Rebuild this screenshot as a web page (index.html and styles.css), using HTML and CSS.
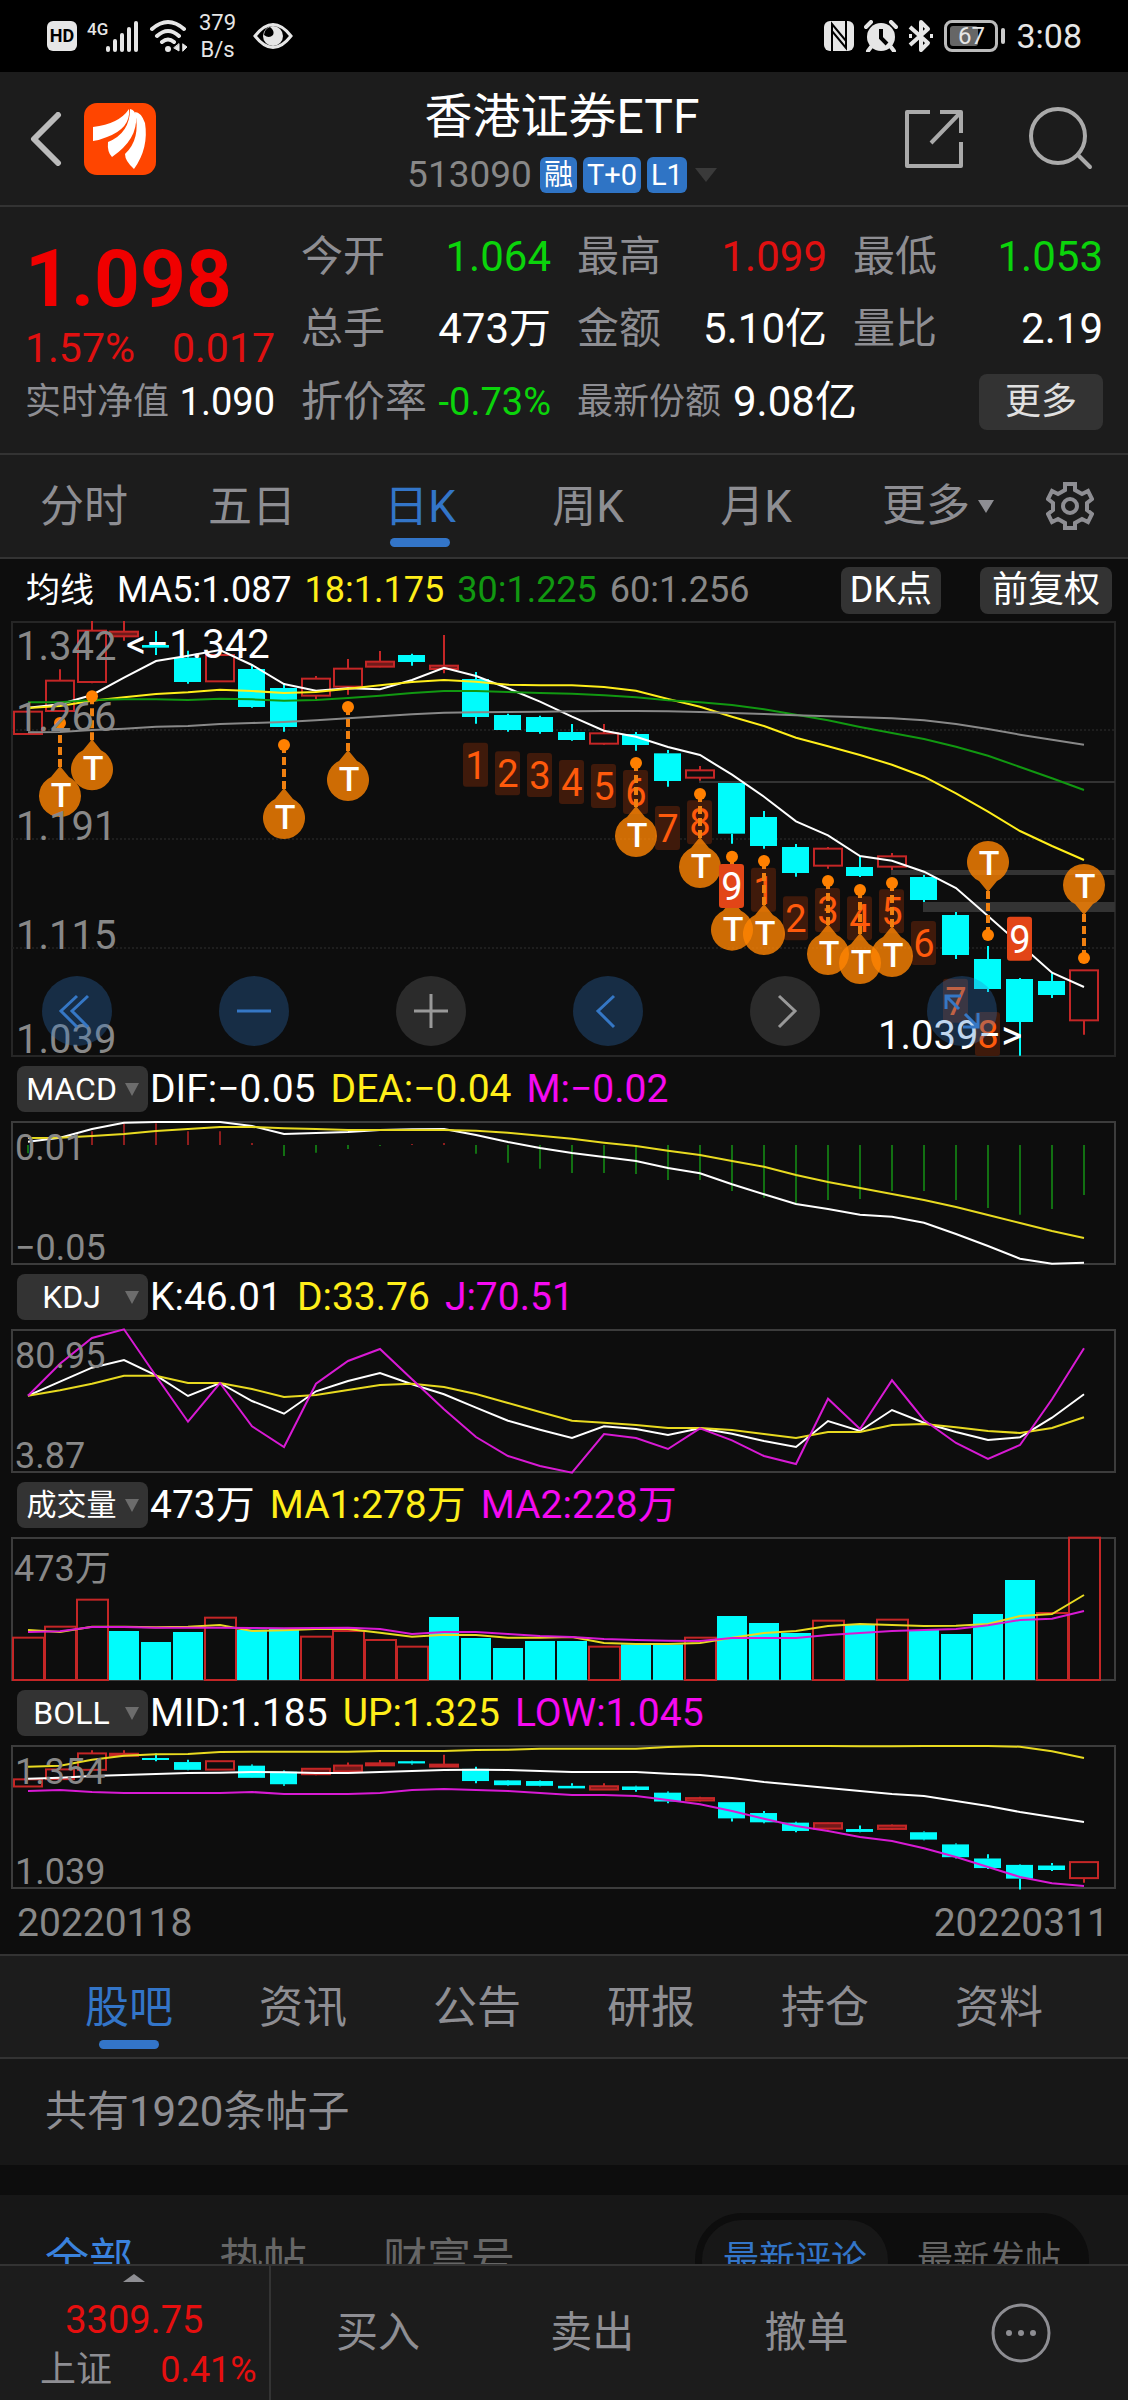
FILE: index.html
```html
<!DOCTYPE html>
<html lang="zh-CN">
<head>
<meta charset="utf-8">
<meta name="viewport" content="width=device-width, initial-scale=1">
<title>香港证券ETF 513090</title>
<link rel="stylesheet" href="styles.css">
</head>
<body>
<div class="app">
  <div class="status">
    <div class="status-side">
      <span class="hd">HD</span>
      <svg class="signal" width="52" height="36" viewBox="0 0 52 36" fill="#e6e6e6"><text x="0" y="17" class="net">4G</text><rect x="19" y="28" width="4" height="6" rx="2"/><rect x="26" y="21" width="4" height="13" rx="2"/><rect x="33" y="15" width="4" height="19" rx="2"/><rect x="40" y="9" width="4" height="25" rx="2"/><rect x="47" y="3" width="4" height="31" rx="2"/></svg>
      <svg class="wifi" width="40" height="36" viewBox="0 0 40 36" fill="none" stroke="#e6e6e6" stroke-width="4" stroke-linecap="round"><path d="M3 11Q19-3 35 11M8 18Q19 8 30 18M13 24Q19 19 25 24"/><circle cx="19" cy="31" r="3" fill="#e6e6e6" stroke="none"/><path d="M30 26v7l-5-3zM34 26l4 3-4 4z" fill="#e6e6e6" stroke-width="1"/></svg>
      <span class="rate">379<br>B/s</span>
      <svg class="eye" width="40" height="28" viewBox="0 0 40 28"><path d="M2 14Q20-9 38 14Q20 37 2 14Z" fill="none" stroke="#e6e6e6" stroke-width="3"/><circle cx="20" cy="14" r="10" fill="#e6e6e6"/><path d="M17 5a9 9 0 0 0-6 8q5 4 9 0 2-4-3-8z" fill="#000"/></svg>
    </div>
    <div class="status-side">
      <svg width="30" height="30" viewBox="0 0 30 30"><rect width="30" height="30" rx="6" fill="#e6e6e6"/><path d="M8 30V3l14 17V7M22 0v27L8 10v13" fill="none" stroke="#000" stroke-width="2"/></svg>
      <svg class="alarm" width="34" height="32" viewBox="0 0 34 32"><circle cx="17" cy="17" r="14" fill="#e6e6e6"/><path d="M2 7l5-5M32 7l-5-5M7 27l-3 4M27 27l3 4" stroke="#e6e6e6" stroke-width="4" stroke-linecap="round"/><path d="M17 9v9l6 6" fill="none" stroke="#000" stroke-width="4"/></svg>
      <svg width="26" height="34" viewBox="0 0 26 34" fill="none" stroke="#e6e6e6" stroke-width="4" stroke-linejoin="round"><path d="M2 8l18 16-7 7V3l7 7L2 26"/><path d="M22 17h3M1 17h3"/></svg>
      <span class="battery"><i></i><b>67</b></span>
      <span class="clock">3:08</span>
    </div>
  </div>

  <header class="header">
    <div class="header-left">
      <button class="icon-btn" aria-label="返回"><svg width="32" height="54" viewBox="0 0 32 54" fill="none" stroke="#bbb" stroke-width="6" stroke-linecap="round" stroke-linejoin="round"><path d="M28 3L4 27l24 24"/></svg></button>
      <svg class="logo" width="72" height="72" viewBox="0 0 72 72"><rect width="72" height="72" rx="13" fill="#ff4500"/><path d="M9 24Q35 21 45 6Q47 25 23 34Q16 37 9 38ZM24 39Q46 30 46 6Q51 7 52 13Q54 36 28 54Q23 49 24 39ZM41 51Q57 36 51 9Q57 9 61 20Q65 45 50 66Q41 58 41 51Z" fill="#fff"/></svg>
    </div>
    <div class="header-title">
      <h1>香港证券ETF</h1>
      <div class="code">513090<span class="badges"><span>融</span><span>T+0</span><span>L1</span></span><svg width="22" height="14" viewBox="0 0 22 14"><path d="M0 0h22L11 14z" fill="#3a3a3a"/></svg></div>
    </div>
    <div class="header-right">
      <button class="icon-btn" aria-label="分享"><svg width="60" height="60" viewBox="0 0 60 60" fill="none" stroke="#aaa" stroke-width="4" stroke-linejoin="round"><path d="M26 3H3v54h54V33M36 3h21v21M57 3L27 34"/></svg></button>
      <button class="icon-btn" aria-label="搜索"><svg width="66" height="66" viewBox="0 0 66 66" fill="none" stroke="#aaa" stroke-width="4" stroke-linecap="round"><circle cx="30" cy="30" r="27"/><path d="M50 49l12 12"/></svg></button>
    </div>
  </header>

  <section class="quote">
    <div class="price">
      <strong>1.098</strong>
      <div><span>1.57%</span><span>0.017</span></div>
    </div>
    <div class="cell"><span>今开</span><b class="green">1.064</b></div>
    <div class="cell"><span>最高</span><b class="red">1.099</b></div>
    <div class="cell"><span>最低</span><b class="green">1.053</b></div>
    <div class="cell"><span>总手</span><b>473万</b></div>
    <div class="cell"><span>金额</span><b>5.10亿</b></div>
    <div class="cell"><span>量比</span><b>2.19</b></div>
    <div class="cell small"><span>实时净值</span><b>1.090</b></div>
    <div class="cell"><span>折价率</span><b class="green mid">-0.73%</b></div>
    <div class="cell share"><span>最新份额</span><b>9.08亿</b><button class="more">更多</button></div>
  </section>

  <nav class="periods">
    <a href="#">分时</a><a href="#">五日</a><a href="#" class="active">日K</a><a href="#">周K</a><a href="#">月K</a>
    <a href="#" class="other">更多<svg width="16" height="13" viewBox="0 0 16 13"><path d="M0 0h16L8 13z" fill="#8e8e93"/></svg></a>
    <button class="icon-btn gear" aria-label="设置"><svg width="48" height="50" viewBox="0 0 48 50" fill="none" stroke="#8e8e93" stroke-width="4"><path d="M19 3h10v6l7 4 6-3 4 8-5 4v7l5 4-4 8-6-3-7 4v5H19v-5l-7-4-6 3-4-8 5-4v-7l-5-4 4-8 6 3 7-4z"/><circle cx="24" cy="25" r="7"/></svg></button>
  </nav>

  <main class="content">
    <section class="charts">
      <div class="averages">
        <span class="averages-name">均线</span><span>MA5:1.087</span><span class="yellow">18:1.175</span><span class="ma30">30:1.225</span><span class="grey">60:1.256</span>
        <button class="tag dk">DK点</button><button class="tag">前复权</button>
      </div>
      <div class="kline">
        <svg id="kline" class="chart" viewBox="0 0 1128 436"></svg>
        <div class="tools">
          <button aria-label="最早"><svg viewBox="0 0 70 70"><path d="M35 20L19 35l16 16M46 20L30 35l16 16"/></svg></button>
          <button aria-label="缩小"><svg viewBox="0 0 70 70"><path d="M18 35h34"/></svg></button>
          <button aria-label="放大" class="off"><svg viewBox="0 0 70 70"><path d="M18 35h34M35 18v34"/></svg></button>
          <button aria-label="向左"><svg viewBox="0 0 70 70"><path d="M41 20L25 35l16 16"/></svg></button>
          <button aria-label="向右" class="off"><svg viewBox="0 0 70 70"><path d="M29 20l16 15-16 16"/></svg></button>
          <button aria-label="全屏"><svg viewBox="0 0 70 70"><path d="M19 33V20h15M20 21l12 12M51 37v14H36M50 50L38 38"/></svg></button>
        </div>
      </div>

      <div class="legend"><button class="pick"><span>MACD</span><i></i></button><span>DIF:−0.05</span><span class="yellow">DEA:−0.04</span><span class="pink">M:−0.02</span></div>
      <svg id="macd" class="chart" viewBox="0 0 1128 144"></svg>

      <div class="legend"><button class="pick"><span>KDJ</span><i></i></button><span>K:46.01</span><span class="yellow">D:33.76</span><span class="pink">J:70.51</span></div>
      <svg id="kdj" class="chart" viewBox="0 0 1128 144"></svg>

      <div class="legend"><button class="pick cjk"><span>成交量</span><i></i></button><span>473万</span><span class="yellow">MA1:278万</span><span class="pink">MA2:228万</span></div>
      <svg id="volume" class="chart" viewBox="0 0 1128 144"></svg>

      <div class="legend"><button class="pick"><span>BOLL</span><i></i></button><span>MID:1.185</span><span class="yellow">UP:1.325</span><span class="pink">LOW:1.045</span></div>
      <svg id="boll" class="chart" viewBox="0 0 1128 144"></svg>

      <div class="dates"><span>20220118</span><span>20220311</span></div>
    </section>

    <nav class="topics">
      <a href="#" class="active">股吧</a><a href="#">资讯</a><a href="#">公告</a><a href="#">研报</a><a href="#">持仓</a><a href="#">资料</a>
    </nav>
    <p class="count">共有1920条帖子</p>
    <div class="feed">
      <a href="#" class="active">全部</a><a href="#">热帖</a><a href="#">财富号</a>
      <div class="sort"><button class="on">最新评论</button><button>最新发帖</button></div>
    </div>
  </main>

  <footer class="bottom">
    <div class="index">
      <svg width="22" height="8" viewBox="0 0 22 8"><path d="M0 8h22L11 0z" fill="#8e8e93"/></svg>
      <strong>3309.75</strong>
      <div><span>上证</span><b>0.41%</b></div>
    </div>
    <button>买入</button><button>卖出</button><button>撤单</button>
    <button aria-label="更多操作"><svg width="60" height="60" viewBox="0 0 60 60"><circle cx="30" cy="30" r="28" fill="none" stroke="#8e8e93" stroke-width="3"/><g fill="#8e8e93"><circle cx="18" cy="30" r="3"/><circle cx="30" cy="30" r="3"/><circle cx="42" cy="30" r="3"/></g></svg></button>
  </footer>
</div>
<script src="charts.js"></script>
</body>
</html>
```
FILE: styles.css
```css
* { box-sizing: border-box; }
body {
  margin: 0;
  background: #0d0d0d;
  color: #fff;
  font-family: Roboto, "Noto Sans CJK SC", sans-serif;
}
button { border: 0; padding: 0; background: none; color: inherit; font: inherit; }
a { color: inherit; text-decoration: none; }
b { font-weight: 400; }
svg { display: block; flex: none; }

.app { height: 100vh; display: flex; flex-direction: column; background: #1c1c1c; }
.green { color: #0bd40b; }
.red { color: #e01010; }
.yellow { color: #ffee1a; }
.pink { color: #f50af0; }
.ma30 { color: #119811; }
.grey { color: #888; }

/* status bar */
.status { flex: none; height: 72px; padding: 0 46px 0 47px; display: flex; justify-content: space-between; background: #000; color: #e6e6e6; }
.status-side { display: flex; align-items: center; gap: 10px; }
.hd { width: 30px; height: 30px; border-radius: 6px; background: #e6e6e6; color: #000; font-size: 18px; font-weight: 700; line-height: 30px; text-align: center; }
.net { font-size: 17px; font-weight: 500; }
.rate { margin: 0 7px 0 0; font-size: 22px; line-height: 27px; text-align: center; }
.battery { position: relative; width: 54px; height: 32px; margin-right: 8px; border: 3px solid #bbb; border-radius: 8px; text-align: center; }
.battery::after { content: ""; position: absolute; right: -10px; top: 5px; width: 4px; height: 16px; border-radius: 2px; background: #ccc; }
.battery i { position: absolute; left: 3px; top: 3px; width: 28px; height: 20px; border-radius: 3px; background: #666; }
.battery b { position: relative; display: block; font-size: 24px; line-height: 26px; }
.clock { font-size: 34px; }

/* title bar */
.header { flex: none; height: 135px; padding: 0 34px 0 30px; display: grid; grid-template-columns: 1fr auto 1fr; align-items: center; border-bottom: 2px solid #333; }
.header-left { display: flex; align-items: center; gap: 22px; }
.header-title { padding-top: 4px; display: flex; flex-direction: column; align-items: center; }
.header-title h1 { margin: 0; font-size: 48px; font-weight: 400; line-height: 68px; }
.code { display: flex; align-items: center; gap: 8px; color: #888; font-size: 37px; line-height: 48px; }
.badges { display: flex; gap: 6px; color: #fff; font-size: 29px; line-height: 36px; }
.badges span { padding: 0 4px; border-radius: 6px; background: #2f74c5; }
.header-right { display: flex; align-items: center; justify-content: flex-end; gap: 64px; }

/* quote */
.quote { flex: none; padding: 14px 25px; display: grid; grid-template-columns: repeat(4, 1fr); grid-template-rows: 72px 72px 74px; column-gap: 26px; border-bottom: 2px solid #333; }
.price { grid-row: 1 / 3; display: flex; flex-direction: column; color: #e01010; }
.price strong { margin-top: 14px; color: #f00000; font-size: 80px; font-weight: 700; line-height: 88px; }
.price div { display: flex; justify-content: space-between; font-size: 41px; line-height: 50px; }
.cell { display: flex; align-items: center; justify-content: space-between; font-size: 42px; line-height: 56px; white-space: nowrap; }
.cell span { color: #8e8e93; }
.small b, .cell .mid { font-size: 38px; }
.small span, .share span { font-size: 36px; }
.share { grid-column: 3 / 5; gap: 12px; }
.more { margin-left: auto; width: 124px; height: 56px; border-radius: 8px; background: #333; color: #e0e0e0; font-size: 36px; line-height: 56px; }

/* period tabs */
.periods { flex: none; height: 104px; display: flex; border-bottom: 2px solid #333; color: #8e8e93; font-size: 44px; line-height: 104px; text-align: center; }
.periods a { position: relative; flex: 0 0 168px; }
.periods .other { flex: 1; display: flex; align-items: center; justify-content: flex-end; gap: 8px; }
.gear { margin: 0 34px 0 52px; display: flex; align-items: center; }
.periods .active, .topics .active { color: #3375c8; }
.periods .active::after, .topics .active::after { content: ""; position: absolute; left: 50%; bottom: 10px; width: 60px; height: 9px; margin-left: -30px; border-radius: 5px; background: #3375c8; }

/* charts */
.content { flex: 1; min-height: 0; overflow: hidden; background: #0d0d0d; }
.averages { height: 62px; padding: 0 16px 0 26px; display: flex; align-items: center; gap: 13px; font-size: 36px; line-height: 48px; }
.averages-name { margin-right: 10px; font-size: 34px; }
.tag { padding: 0 12px; border-radius: 8px; background: #333; font-size: 36px; line-height: 47px; }
.dk { margin: 0 26px 0 auto; padding: 0 9px; }
.chart { width: 100%; overflow: visible; }
.kline { position: relative; }
.tools { position: absolute; left: 42px; top: 355px; display: flex; gap: 107px; }
.tools button { width: 70px; height: 70px; border-radius: 50%; background: rgba(45, 120, 200, .3); }
.tools svg { fill: none; stroke: #3577c5; stroke-width: 3; }
.tools .off { background: #2b2b2b; }
.tools .off svg { stroke: #999; }
.legend { height: 64px; padding-left: 17px; display: flex; align-items: center; gap: 15px; font-size: 39px; line-height: 48px; }
.pick { width: 131px; height: 46px; margin-right: -13px; padding: 0 9px; display: flex; align-items: center; border-radius: 8px; background: #333; font-size: 32px; line-height: 46px; }
.pick span { flex: 1; text-align: center; }
.pick.cjk { font-size: 30px; }
.pick i { margin-left: 8px; border: 7px solid transparent; border-top: 13px solid #6c6c6c; border-bottom: 0; }
.dates { height: 65px; padding: 2px 19px 0 17px; display: flex; align-items: center; justify-content: space-between; color: #888; font-size: 39px; }

.chart .line { fill: none; stroke-width: 2; }
.chart text { font-size: 36px; fill: #888; }
.chart .big { font-size: 40px; }
.chart .peak { font-size: 40px; fill: #fff; }
.chart .nine { font-size: 38px; text-anchor: middle; }
.chart .trade { font-size: 34px; font-weight: 500; fill: #fff; text-anchor: middle; }

/* community */
.topics { height: 105px; padding: 0 42px; display: flex; border-top: 2px solid #333; border-bottom: 2px solid #333; background: #1c1c1c; color: #8e8e93; font-size: 44px; line-height: 104px; text-align: center; }
.topics a { position: relative; flex: 1; }
.topics .active::after { bottom: 8px; }
.count { margin: 0; padding-left: 45px; background: #171717; color: #8e8e93; font-size: 42px; line-height: 106px; }
.feed { height: 130px; margin-top: 30px; padding: 0 39px 0 45px; display: flex; align-items: center; gap: 76px; background: #171717; color: #666; font-size: 44px; line-height: 60px; }
.feed .active { margin-right: 10px; color: #3a82dd; }
.sort { height: 94px; margin-left: auto; padding: 7px; display: flex; border-radius: 47px; background: #0d0d0d; font-size: 36px; }
.sort button { height: 80px; padding: 0 21px; border-radius: 40px; }
.sort .on { margin-right: 8px; background: #171717; color: #3375c8; }

/* bottom bar */
.bottom { position: relative; flex: none; height: 136px; display: flex; align-items: center; border-top: 2px solid #333; background: #1c1c1c; color: #8e8e93; font-size: 42px; line-height: 60px; }
.bottom > button { flex: 1; display: flex; justify-content: center; }
.index { flex: 0 0 24%; height: 100%; padding: 8px 12px 0 40px; display: flex; flex-direction: column; border-right: 2px solid #333; }
.index svg { align-self: center; margin-right: 28px; }
.index strong { align-self: center; margin: 13px 28px 0 0; color: #e60f0f; font-size: 38px; font-weight: 400; line-height: 50px; }
.index div { display: flex; justify-content: space-between; align-items: center; font-size: 36px; line-height: 50px; }
.index b { color: #e60f0f; }
```
FILE: charts.js
```javascript
// Every level below is in thirds of a pixel, measured downwards.
const NS = 'http://www.w3.org/2000/svg';
const STEP = 32;
const FIRST = 28;
const RED = '#c42626';
const CYAN = '#00fcfc';
const xAt = i => FIRST + STEP * i;

function add(svg, tag, attrs, text) {
  const el = document.createElementNS(NS, tag);
  for (const key in attrs) el.setAttribute(key, attrs[key]);
  if (text) el.textContent = text;
  svg.appendChild(el);
  return el;
}
function frame(svg, height, color) {
  add(svg, 'rect', { x: 12, y: 1, width: 1103, height: height - 2, fill: 'none', stroke: color, 'stroke-width': 2 });
}
function line(svg, levels, y, color) {
  add(svg, 'polyline', { class: 'line', stroke: color, points: levels.map((v, i) => xAt(i) + ',' + y(v).toFixed(1)).join(' ') });
}
function label(svg, x, y, text, cls) {
  add(svg, 'text', { x: x, y: y, class: cls || '' }, text);
}

// direction, body top, body bottom, high, low
const candles = [
  ['r', 305, 372, 305, 372], ['r', 212, 303, 178, 303], ['r', 62, 216, 33, 220], ['r', 65, 79, 33, 92],
  ['c', 105, 113, 63, 135], ['c', 143, 216, 122, 221], ['r', 135, 214, 135, 214], ['c', 177, 291, 165, 293],
  ['c', 234, 351, 222, 365], ['r', 206, 257, 198, 267], ['r', 176, 230, 147, 254], ['r', 155, 170, 123, 172],
  ['c', 135, 156, 131, 167], ['r', 167, 177, 75, 190], ['c', 207, 321, 186, 341], ['c', 315, 360, 311, 365],
  ['c', 321, 366, 317, 371], ['c', 366, 390, 342, 392], ['r', 370, 401, 342, 404], ['c', 372, 405, 366, 422],
  ['c', 430, 513, 420, 530], ['r', 481, 503, 468, 512], ['c', 519, 671, 519, 701], ['c', 621, 708, 603, 716],
  ['c', 711, 789, 702, 800], ['r', 716, 767, 711, 776], ['c', 771, 798, 738, 801], ['r', 739, 770, 729, 780],
  ['c', 801, 870, 795, 876], ['c', 915, 1035, 906, 1047], ['c', 1047, 1137, 1008, 1146], ['c', 1107, 1236, 1104, 1337],
  ['c', 1113, 1155, 1090, 1164], ['r', 1081, 1231, 1081, 1274]
];

function drawCandles(svg, y) {
  candles.forEach(([dir, top, bottom, high, low], i) => {
    const x = xAt(i);
    const color = dir === 'r' ? RED : CYAN;
    const wick = (a, b) => b > a && add(svg, 'path', { d: `M${x} ${y(a)}V${y(b)}`, stroke: color, 'stroke-width': 2 });
    wick(high, top);
    wick(bottom, low);
    const h = Math.max(y(bottom) - y(top), 2);
    if (dir === 'r') {
      add(svg, 'rect', { x: x - 14, y: y(top), width: 28, height: h, fill: h < 6 ? '#701a1a' : 'none', stroke: RED, 'stroke-width': 2 });
    } else {
      add(svg, 'rect', { x: x - 14, y: y(top), width: 27, height: h, fill: CYAN });
    }
  });
}

// Daily candles with moving averages
const kline = document.getElementById('kline');
const ky = v => v / 3 - 11;
frame(kline, 436, '#262626');
[109, 218, 327].forEach(y => add(kline, 'path', { d: `M12 ${y}H1115`, stroke: '#1e1e1e', 'stroke-width': 2, 'stroke-dasharray': '2 2' }));
[[699, 160, 2], [891, 249, 5], [923, 281, 10]].forEach(([x, y, h]) => add(kline, 'rect', { x: x, y: y, width: 1115 - x, height: h, fill: '#333' }));
drawCandles(kline, ky);
line(kline, [293, 283, 255, 203, 153, 137, 120, 165, 222, 242, 235, 238, 210, 173, 198, 235, 275, 320, 362, 380, 411, 435, 494, 560, 634, 676, 738, 752, 785, 834, 918, 1003, 1088, 1131], ky, '#fff');
line(kline, [294, 288, 272, 262, 252, 247, 239, 243, 249, 246, 236, 226, 216, 210, 215, 224, 226, 226, 231, 242, 267, 290, 320, 348, 383, 409, 435, 464, 500, 550, 605, 663, 708, 750], ky, '#ffee1a');
line(kline, [277, 277, 270, 268, 268, 270, 266, 268, 272, 270, 264, 257, 249, 243, 243, 246, 249, 251, 256, 262, 271, 277, 285, 298, 314, 331, 351, 369, 387, 410, 437, 471, 505, 540], ky, '#119811');
line(kline, [367, 366, 360, 356, 350, 348, 342, 339, 336, 331, 325, 319, 313, 308, 307, 306, 305, 304, 303, 303, 304, 306, 309, 312, 316, 319, 322, 325, 331, 342, 357, 374, 389, 404], ky, '#888');

function count(i, n, top) {
  const strong = n === 9;
  add(kline, 'rect', { x: xAt(i) - 13, y: ky(top), width: 25, height: 44, rx: 3, fill: strong ? '#e24517' : '#3f1a0b' });
  add(kline, 'text', { x: xAt(i), y: ky(top) + 36, class: 'nine', style: 'fill:' + (strong ? '#fff' : '#ff5a0c') }, String(n));
}
[[14, 1, 398], [15, 2, 424], [16, 3, 429], [17, 4, 450], [18, 5, 462], [19, 6, 480], [20, 7, 588], [21, 8, 571], [23, 1, 773], [24, 2, 859], [25, 3, 834], [26, 4, 859], [27, 5, 838], [28, 6, 933], [29, 7, 1106], [30, 8, 1206]].forEach(c => count(...c));

function trade(i, dot, dir) {
  const x = xAt(i);
  const y = ky(dot);
  const c = y + 72 * dir;
  add(kline, 'path', { d: `M${x} ${y}V${y + 44 * dir}`, stroke: '#f08010', 'stroke-width': 4, 'stroke-dasharray': '8 4' });
  add(kline, 'circle', { cx: x, cy: y, r: 6, fill: '#ff8000' });
  add(kline, 'path', { d: `M${x} ${y + 43 * dir}L${x + 9} ${c - 18 * dir}A21 21 0 1 ${dir > 0 ? 1 : 0} ${x - 9} ${c - 18 * dir}Z`, fill: '#ff8402', opacity: .8 });
  add(kline, 'text', { x: x + 1, y: c + 12, class: 'trade' }, 'T');
}
[[1, 339, 1], [2, 259, 1], [8, 405, 1], [10, 291, 1], [19, 459, 1], [21, 552, 1], [22, 740, 1], [23, 753, 1], [25, 813, 1], [26, 840, 1], [27, 819, 1], [30, 975, -1], [33, 1044, -1]].forEach(t => trade(...t));
count(22, 9, 762);
count(31, 9, 920);

label(kline, 16, 39, '1.342', 'big');
label(kline, 16, 110, '1.266', 'big');
label(kline, 16, 219, '1.191', 'big');
label(kline, 16, 328, '1.115', 'big');
label(kline, 16, 432, '1.039', 'big');
label(kline, 126, 37, '<−1.342', 'peak');
label(kline, 878, 428, '1.039−>', 'peak');

// MACD
const macd = document.getElementById('macd');
const my = v => v / 3 - 71;
frame(macd, 144, '#3c3c3c');
[310, 285, -244, -220, -220, -244, -244, -279, 318, 308, 297, 288, -282, -279, 311, 338, 356, 369, 369, 372, 390, 390, 423, 443, 462, 450, 447, 423, 423, 450, 474, 494, 477, 435].forEach((v, i) =>
  add(macd, 'path', { d: `M${xAt(i)} ${my(285)}V${my(Math.abs(v))}`, stroke: v < 0 ? '#8f1d1d' : '#127012', 'stroke-width': 2 }));
line(macd, [275, 263, 237, 218, 211, 215, 211, 228, 252, 249, 246, 240, 238, 237, 255, 276, 294, 309, 321, 333, 354, 370, 403, 433, 462, 477, 494, 500, 518, 552, 588, 626, 641, 638], v => Math.max(my(v), 1), '#fff');
line(macd, [264, 263, 258, 252, 243, 237, 231, 231, 235, 237, 240, 240, 240, 240, 242, 248, 257, 266, 278, 288, 302, 315, 333, 350, 375, 396, 414, 432, 450, 471, 495, 519, 543, 564], my, '#e8da20');
label(macd, 15, 39, '0.01');
label(macd, 15, 139, '−0.05');

// KDJ
const kdj = document.getElementById('kdj');
const jy = v => v / 3 - 278;
frame(kdj, 144, '#3c3c3c');
line(kdj, [1034, 992, 950, 927, 973, 1035, 996, 1050, 1088, 1021, 990, 966, 1000, 1030, 1070, 1109, 1136, 1161, 1126, 1134, 1152, 1132, 1148, 1170, 1188, 1110, 1140, 1077, 1115, 1143, 1167, 1159, 1100, 1030], jy, '#fff');
line(kdj, [1034, 1018, 998, 974, 974, 996, 996, 1014, 1038, 1032, 1017, 1002, 998, 1008, 1029, 1056, 1083, 1109, 1115, 1122, 1131, 1131, 1137, 1149, 1161, 1143, 1143, 1122, 1119, 1129, 1140, 1146, 1131, 1099], jy, '#e8da20');
line(kdj, [1034, 938, 861, 835, 975, 1112, 996, 1126, 1188, 998, 930, 894, 985, 1075, 1158, 1215, 1245, 1265, 1149, 1161, 1194, 1132, 1168, 1215, 1239, 1043, 1134, 988, 1107, 1176, 1224, 1182, 1045, 892], jy, '#d81ad4');
label(kdj, 15, 39, '80.95');
label(kdj, 15, 139, '3.87');

// Volume
const volume = document.getElementById('volume');
const vy = v => v / 3 - 66;
frame(volume, 144, '#3c3c3c');
const volumes = [500, 467, 386, 480, 513, 483, 440, 476, 473, 497, 480, 507, 527, 438, 501, 531, 510, 510, 527, 520, 520, 500, 435, 456, 486, 449, 459, 446, 477, 489, 429, 327, 426, 200];
const sides = 'rrrcccrccrrrrccccc' + 'rccrcccrcrccccrr';
volumes.forEach((v, i) => {
  const up = sides[i] === 'r';
  add(volume, 'rect', { x: xAt(i) - 15, y: vy(v), width: up ? 31 : 30, height: 143 - vy(v), fill: up ? 'none' : CYAN, stroke: up ? RED : 'none', 'stroke-width': 2 });
});
line(volume, [477, 483, 467, 467, 469, 467, 462, 480, 478, 474, 474, 485, 497, 491, 492, 500, 500, 498, 516, 519, 519, 516, 500, 486, 480, 465, 459, 462, 465, 464, 459, 435, 429, 372], vy, '#e8da20');
line(volume, [483, 481, 468, 468, 470, 470, 470, 471, 472, 471, 470, 474, 489, 483, 483, 489, 495, 498, 504, 507, 509, 510, 501, 501, 501, 492, 486, 480, 477, 474, 463, 447, 443, 420], vy, '#d81ad4');
label(volume, 14, 44, '473万');

// Bollinger bands over the same candles, on a flatter scale
const boll = document.getElementById('boll');
const by = v => v / 3 - 274;
frame(boll, 144, '#3c3c3c');
drawCandles(boll, v => by(925 + 0.32 * (v - 305)));
line(boll, [887, 884, 866, 854, 850, 849, 843, 842, 842, 842, 842, 840, 840, 840, 837, 836, 833, 833, 833, 833, 828, 825, 825, 825, 825, 825, 826, 826, 825, 825, 825, 827, 841, 861], by, '#e8da20');
line(boll, [923, 920, 915, 912, 909, 906, 905, 903, 904, 906, 906, 903, 900, 897, 896, 897, 900, 903, 903, 903, 908, 912, 921, 933, 942, 951, 960, 969, 975, 990, 1005, 1023, 1038, 1053], by, '#fff');
line(boll, [960, 957, 963, 966, 966, 966, 966, 963, 969, 969, 969, 966, 957, 954, 957, 960, 966, 972, 972, 975, 987, 1000, 1020, 1043, 1065, 1080, 1098, 1110, 1132, 1158, 1188, 1218, 1237, 1245], by, '#d81ad4');
label(boll, 15, 39, '1.354');
label(boll, 15, 139, '1.039');
```
